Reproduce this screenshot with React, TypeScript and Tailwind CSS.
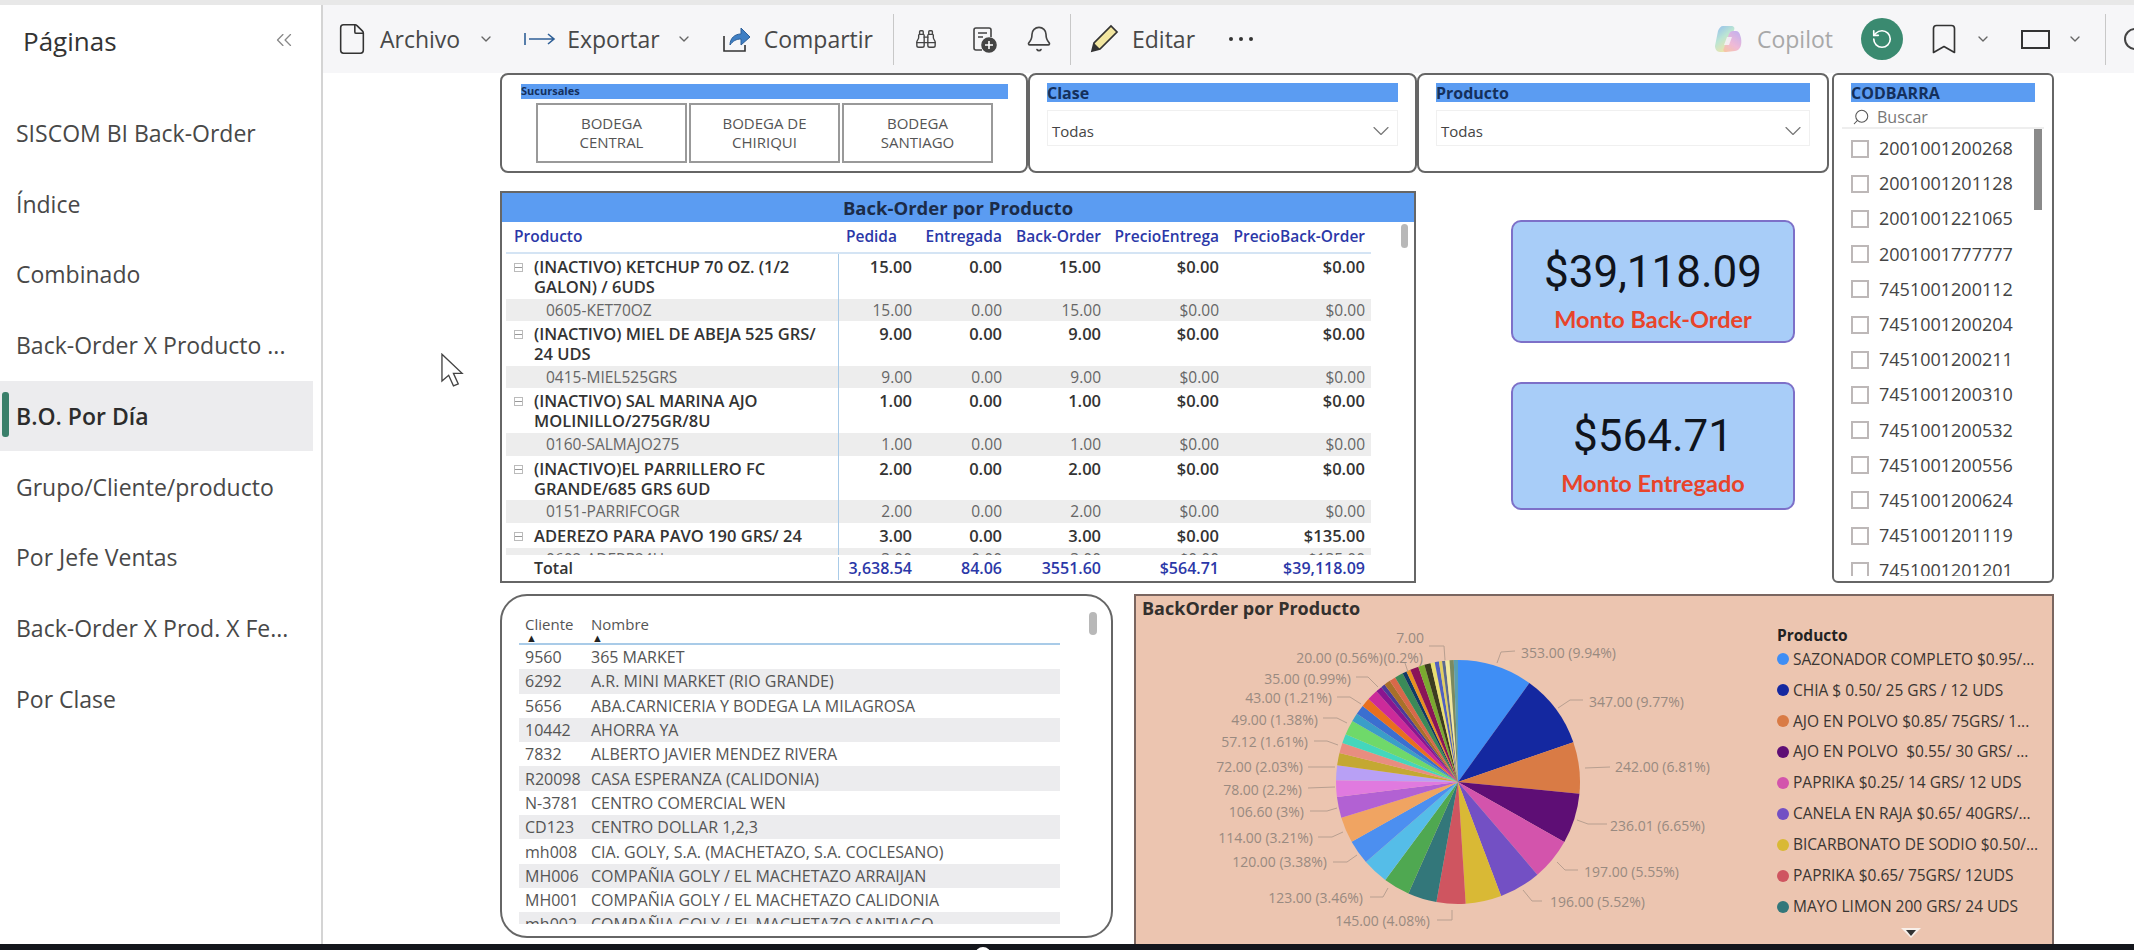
import { Bell, Binoculars, Bookmark, ChevronDown, ChevronsLeft, File, RotateCcw, Search } from "lucide-react";

const pages = [
  "SISCOM BI Back-Order",
  "Índice",
  "Combinado",
  "Back-Order X Producto ...",
  "B.O. Por Día",
  "Grupo/Cliente/producto",
  "Por Jefe Ventas",
  "Back-Order X Prod. X Fe...",
  "Por Clase",
];

const products = [
  { name: "(INACTIVO) KETCHUP 70 OZ. (1/2 GALON) / 6UDS", code: "0605-KET70OZ", vals: ["15.00", "0.00", "15.00", "$0.00", "$0.00"] },
  { name: "(INACTIVO) MIEL DE ABEJA 525 GRS/ 24 UDS", code: "0415-MIEL525GRS", vals: ["9.00", "0.00", "9.00", "$0.00", "$0.00"] },
  { name: "(INACTIVO) SAL MARINA AJO MOLINILLO/275GR/8U", code: "0160-SALMAJO275", vals: ["1.00", "0.00", "1.00", "$0.00", "$0.00"] },
  { name: "(INACTIVO)EL PARRILLERO FC GRANDE/685 GRS 6UD", code: "0151-PARRIFCOGR", vals: ["2.00", "0.00", "2.00", "$0.00", "$0.00"] },
  { name: "ADEREZO PARA PAVO 190 GRS/ 24", code: "0602-ADERP24U", vals: ["3.00", "0.00", "3.00", "$0.00", "$135.00"] },
];

const barcodes = [
  "2001001200268", "2001001201128", "2001001221065", "2001001777777", "7451001200112", "7451001200204", "7451001200211",
  "7451001200310", "7451001200532", "7451001200556", "7451001200624", "7451001201119", "7451001201201",
];

const clients = [
  ["9560", "365 MARKET"],
  ["6292", "A.R. MINI MARKET (RIO GRANDE)"],
  ["5656", "ABA.CARNICERIA Y BODEGA LA MILAGROSA"],
  ["10442", "AHORRA YA"],
  ["7832", "ALBERTO JAVIER MENDEZ RIVERA"],
  ["R20098", "CASA ESPERANZA (CALIDONIA)"],
  ["N-3781", "CENTRO COMERCIAL WEN"],
  ["CD123", "CENTRO DOLLAR 1,2,3"],
  ["mh008", "CIA. GOLY, S.A. (MACHETAZO, S.A. COCLESANO)"],
  ["MH006", "COMPAÑIA GOLY / EL MACHETAZO ARRAIJAN"],
  ["MH001", "COMPAÑIA GOLY / EL MACHETAZO CALIDONIA"],
  ["mh002", "COMPAÑIA GOLY / EL MACHETAZO SANTIAGO"],
];

const legend = [
  ["#3f8ef5", "SAZONADOR COMPLETO $0.95/..."],
  ["#1428a0", "CHIA $ 0.50/ 25 GRS / 12 UDS"],
  ["#d97b45", "AJO EN POLVO $0.85/ 75GRS/ 1..."],
  ["#5e0e75", "AJO EN POLVO  $0.55/ 30 GRS/ ..."],
  ["#d354ac", "PAPRIKA $0.25/ 14 GRS/ 12 UDS"],
  ["#7350c4", "CANELA EN RAJA $0.65/ 40GRS/..."],
  ["#d9b935", "BICARBONATO DE SODIO $0.50/..."],
  ["#cf5560", "PAPRIKA $0.65/ 75GRS/ 12UDS"],
  ["#33777a", "MAYO LIMON 200 GRS/ 24 UDS"],
];

// [end angle, colour], clockwise from 12 o'clock
const slices: [number, string][] = [
  [35.8, "#3f8ef5"], [71, "#1428a0"], [95.5, "#d97b45"], [119.4, "#5e0e75"], [139.4, "#d354ac"], [159.3, "#7350c4"],
  [176.4, "#d9b935"], [190.2, "#cf5560"], [204, "#33777a"], [216.6, "#4fa851"], [229, "#55bde8"], [240.7, "#4c8ff0"],
  [253, "#f0a462"], [262.9, "#b261d3"], [270.8, "#e07adf"], [277.9, "#b8a0f5"], [283.7, "#c4a832"], [288.6, "#e88d80"],
  [293, "#44d6bc"], [300, "#6fd96a"], [304, "#3a9ec8"], [308.6, "#3b6fd0"], [312.8, "#e86f1e"], [318, "#cc2a9a"], [321, "#8a1590"],
  [323, "#4a3a9a"], [326, "#a8702a"], [329, "#d8684a"], [333, "#3b8a58"], [335, "#103a66"], [337, "#e89020"],
  [341, "#8a1458"], [344, "#7aaa30"], [347, "#3c3c20"], [349, "#e8e070"], [351, "#5060c0"], [352.5, "#e0d060"],
  [354, "#5a6a90"], [356, "#f0e8a0"], [358, "#7a8a60"], [360, "#5a9fb0"],
];

// labels use page coordinates, the svg's viewBox starts at the panel's chart area
const pieLabels: [string, number, number, "start" | "end"][] = [
  ["353.00 (9.94%)", 1521, 658, "start"],
  ["347.00 (9.77%)", 1589, 707, "start"],
  ["242.00 (6.81%)", 1615, 772, "start"],
  ["236.01 (6.65%)", 1610, 831, "start"],
  ["197.00 (5.55%)", 1584, 877, "start"],
  ["196.00 (5.52%)", 1550, 907, "start"],
  ["145.00 (4.08%)", 1430, 926, "end"],
  ["123.00 (3.46%)", 1363, 903, "end"],
  ["120.00 (3.38%)", 1327, 867, "end"],
  ["114.00 (3.21%)", 1313, 843, "end"],
  ["106.60 (3%)", 1304, 817, "end"],
  ["78.00 (2.2%)", 1302, 795, "end"],
  ["72.00 (2.03%)", 1303, 772, "end"],
  ["57.12 (1.61%)", 1308, 747, "end"],
  ["49.00 (1.38%)", 1318, 725, "end"],
  ["43.00 (1.21%)", 1332, 703, "end"],
  ["35.00 (0.99%)", 1351, 684, "end"],
  ["20.00 (0.56%)", 1383, 663, "end"],
  ["(0.2%)", 1423, 663, "end"],
  ["7.00", 1424, 643, "end"],
];

const leaders = [
  "1497,663 1501,652 1515,651", "1558,708 1570,700 1583,700", "1585,768 1610,767", "1577,820 1588,824 1607,824",
  "1557,862 1565,870 1578,870", "1523,890 1532,901 1542,901", "1452,910 1452,920 1437,920", "1388,888 1383,897 1370,897",
  "1357,855 1347,862 1333,862", "1343,832 1332,837 1318,837", "1337,808 1327,811 1310,811", "1335,787 1308,788",
  "1335,767 1308,767", "1338,745 1327,741 1314,741", "1347,723 1337,718 1323,718", "1361,704 1350,697 1337,697",
  "1378,687 1368,677 1356,677", "1408,672 1405,663", "1445,660 1444,646 1429,646",
];

function slicePath(from: number, to: number) {
  const cx = 1458, cy = 782, r = 122;
  const pt = (a: number) => {
    const rad = (a * Math.PI) / 180;
    return `${(cx + r * Math.sin(rad)).toFixed(2)} ${(cy - r * Math.cos(rad)).toFixed(2)}`;
  };
  return `M${cx} ${cy}L${pt(from)}A${r} ${r} 0 0 1 ${pt(to)}Z`;
}

function Toolbar() {
  return (
    <div className="flex h-[68px] items-center bg-[#f6f6f8] text-[23px] text-[#484848]">
      <File className="ml-[12px] h-[34px] w-[34px] text-[#333]" strokeWidth={1.1} />
      <span className="ml-[11px]">Archivo</span>
      <ChevronDown className="ml-[18px] h-[16px] w-[16px] text-[#666]" />
      <svg viewBox="0 0 32 16" className="ml-[30px] h-[16px] w-[32px]" fill="none" stroke="#2f5f96" strokeWidth="1.6">
        <path d="M1 2v12M5 8h25M24 3l6 5-6 5" />
      </svg>
      <span className="ml-[11px]">Exportar</span>
      <ChevronDown className="ml-[16px] h-[16px] w-[16px] text-[#666]" />
      <svg viewBox="0 0 30 30" className="ml-[29px] h-[30px] w-[30px]" fill="none">
        <path d="M3 12v15h21v-6" stroke="#333" strokeWidth="1.6" />
        <path d="M9 21c0-7 5-11 11-11V4l9 9-9 8v-6c-5 0-8 2-11 6z" fill="#3f7fc4" stroke="#2c5f99" strokeWidth="1" />
      </svg>
      <span className="ml-[13px]">Compartir</span>
      <div className="ml-[20px] h-[51px] w-px bg-[#c8c8c8]" />
      <Binoculars className="ml-[21px] h-[22px] w-[22px] text-[#444]" strokeWidth={1.5} />
      <svg viewBox="0 0 26 28" className="ml-[34px] h-[28px] w-[26px]" fill="none" stroke="#444" strokeWidth="1.6">
        <path d="M11 25H5a2 2 0 0 1-2-2V5a2 2 0 0 1 2-2h13a2 2 0 0 1 2 2v7M7 8h9M7 12h5" />
        <circle cx="18" cy="20" r="7" fill="#444" />
        <path d="M18 16v8M14 20h8" stroke="#fff" />
      </svg>
      <Bell className="ml-[28px] h-[28px] w-[28px] text-[#444]" strokeWidth={1.4} />
      <div className="ml-[17px] h-[51px] w-px bg-[#c8c8c8]" />
      <svg viewBox="0 0 32 32" className="ml-[17px] h-[32px] w-[32px]" fill="none">
        <path d="M4 28l2-8L23 3l6 6-17 17z" fill="#f2e6a0" stroke="#333" strokeWidth="1.7" />
        <path d="M4 28l2-8 6 6z" fill="#333" />
      </svg>
      <span className="ml-[12px]">Editar</span>
      <div className="ml-[34px] flex gap-[6px]">
        <span className="h-[4px] w-[4px] rounded-full bg-[#333]" />
        <span className="h-[4px] w-[4px] rounded-full bg-[#333]" />
        <span className="h-[4px] w-[4px] rounded-full bg-[#333]" />
      </div>
      <svg viewBox="0 0 28 32" className="ml-auto h-[32px] w-[28px]" opacity="0.75">
        <defs>
          <linearGradient id="copA" x1="0" y1="0" x2="0.6" y2="1">
            <stop offset="0" stopColor="#6fa8ee" />
            <stop offset="0.5" stopColor="#a8e0c8" />
            <stop offset="1" stopColor="#f4e08a" />
          </linearGradient>
          <linearGradient id="copB" x1="0.8" y1="0" x2="0.2" y2="1">
            <stop offset="0" stopColor="#b49aea" />
            <stop offset="0.6" stopColor="#eea6cc" />
            <stop offset="1" stopColor="#f6b48e" />
          </linearGradient>
        </defs>
        <path d="M9 3h8c3 0 4 2 3 4l-6 19c-1 2-2 3-5 3H6c-3 0-5-3-5-6l3-15c1-3 3-5 5-5z" fill="url(#copA)" />
        <path d="M19 8h3c3 0 4 3 5 7 1 6 0 12-6 13l-9 1c-3 0-3-2-2-4l5-14c1-2 2-3 4-3z" fill="url(#copB)" />
        <path d="M13 14h5l-3 8h-5z" fill="#f6f6f8" opacity="0.85" />
      </svg>
      <span className="ml-[15px] text-[#a8a8a8]">Copilot</span>
      <div className="ml-[28px] flex h-[42px] w-[42px] items-center justify-center rounded-full bg-[#3a8a70]">
        <RotateCcw className="h-[22px] w-[22px] text-white" strokeWidth={1.8} />
      </div>
      <Bookmark className="ml-[23px] h-[36px] w-[36px] text-[#333]" strokeWidth={1.1} />
      <ChevronDown className="ml-[13px] h-[16px] w-[16px] text-[#666]" />
      <div className="ml-[30px] h-[19px] w-[29px] border-2 border-[#333]" />
      <ChevronDown className="ml-[17px] h-[16px] w-[16px] text-[#666]" />
      <div className="ml-[22px] h-[51px] w-px bg-[#c8c8c8]" />
      <div className="ml-[18px] mr-[-12px] h-[22px] w-[22px] shrink-0 rounded-full border-2 border-[#444]" />
    </div>
  );
}

function Dropdown({ title }: { title: string }) {
  return (
    <div className="h-[100px] w-full rounded-[8px] border-2 border-[#666] px-[17px] pt-[8px]">
      <div className="flex h-[19px] items-center bg-[#5b9cf2] text-[16px] leading-none font-bold text-[#14305c]">{title}</div>
      <div className="mt-[8px] flex h-[36px] items-center justify-between border border-[#f0f0f0] pt-[6px] pr-[2px] pl-[4px] text-[15px] text-[#444]">
        Todas
        <ChevronDown className="h-[28px] w-[28px] text-[#777]" strokeWidth={1} />
      </div>
    </div>
  );
}

function ProductTable() {
  const cols = "grid grid-cols-[333px_73px_90px_99px_118px_146px] w-[865px]";
  return (
    <div className="h-[392px] w-[916px] border-2 border-[#666]">
      <div className="flex h-[29px] items-center justify-center bg-[#5b9cf2] text-[18.5px] font-bold text-[#1c2c48]">Back-Order por Producto</div>
      <div className="relative pl-[4px]">
        <div className={`${cols} h-[32px] items-center border-b-2 border-[#d4e4f4] text-right text-[15.5px] font-semibold whitespace-nowrap text-[#2b38a8]`}>
          <span className="pl-[8px] text-left">Producto</span>
          <span className="pr-[15px]">Pedida</span>
          <span>Entregada</span>
          <span>Back-Order</span>
          <span>PrecioEntrega</span>
          <span>PrecioBack-Order</span>
        </div>
        <div className="h-[301px] overflow-hidden">
          {products.map((p, i) => (
            <div key={p.code}>
              <div className={`${cols} ${i === 4 ? "h-[25px]" : "h-[44.5px]"} text-right text-[16.5px] leading-[20px] font-semibold text-[#333]`}>
                <div className="flex border-r border-[#a9cbe8] pt-[3px] text-left">
                  <span className="mt-[6px] ml-[8px] flex h-[9px] w-[9px] shrink-0 items-center border border-[#bbb]">
                    <span className="h-px w-full bg-[#999]" />
                  </span>
                  <span className="ml-[11px] w-[300px]">{p.name}</span>
                </div>
                {p.vals.map((v, j) => (
                  <span key={j} className="pt-[3px]">{v}</span>
                ))}
              </div>
              <div className={`${cols} h-[22.7px] items-center bg-[#ededed] text-right text-[15.5px] text-[#666]`}>
                <span className="h-full border-r border-[#a9cbe8] pl-[40px] text-left leading-[22px]">{p.code}</span>
                {p.vals.map((v, j) => (
                  <span key={j}>{v}</span>
                ))}
              </div>
            </div>
          ))}
        </div>
        <div className={`${cols} h-[26px] items-center text-right text-[16px] font-semibold text-[#2b38a8]`}>
          <span className="h-[23px] border-r border-[#a9cbe8] pl-[28px] text-left leading-[23px] text-[#333]">Total</span>
          <span>3,638.54</span>
          <span>84.06</span>
          <span>3551.60</span>
          <span>$564.71</span>
          <span>$39,118.09</span>
        </div>
        <div className="absolute top-[2px] left-[899px] h-[24px] w-[7px] rounded bg-[#b8b8b8]" />
      </div>
    </div>
  );
}

function Kpi({ value, label, height }: { value: string; label: string; height: string }) {
  return (
    <div className={`flex ${height} flex-col items-center justify-center rounded-[10px] border-2 border-[#7d70c8] bg-[#a8cdf8] pt-[16px]`}>
      <div className="font-['Roboto',sans-serif] text-[44px] leading-[50px] text-[#10141c]">{value}</div>
      <div className="mt-[8px] font-['Lato',sans-serif] text-[23.5px] leading-[28px] font-bold text-[#e8442a]">{label}</div>
    </div>
  );
}

function BarcodeSlicer() {
  return (
    <div className="relative ml-[3px] h-[510px] w-[222px] rounded-[6px] border-2 border-[#666] pt-[8px]">
      <div className="mx-[17px] flex h-[19px] items-center bg-[#5b9cf2] text-[16px] leading-none font-bold text-[#14305c]">CODBARRA</div>
      <div className="mx-[8px] flex h-[27px] items-center border-b-2 border-[#eee] pt-[4px] pl-[10px] text-[16px] text-[#777]">
        <Search className="h-[18px] w-[18px] -scale-x-100 text-[#555]" strokeWidth={1.4} />
        <span className="ml-[7px]">Buscar</span>
      </div>
      <div className="h-[447px] overflow-hidden pt-[2px]">
        {barcodes.map((b) => (
          <div key={b} className="flex h-[35.2px] items-center pl-[17px] text-[18px] text-[#444]">
            <span className="h-[18px] w-[18px] border-2 border-[#bdb8b8]" />
            <span className="ml-[10px]">{b}</span>
          </div>
        ))}
      </div>
      <div className="absolute top-[54px] left-[200px] h-[81px] w-[8px] bg-[#8a8a8a]" />
    </div>
  );
}

function ClientTable() {
  return (
    <div className="relative h-[344px] w-[613px] rounded-[27px] border-2 border-[#666] pt-[16px] pl-[17px] text-[16px] text-[#555]">
      <div className="flex h-[33px] w-[541px] border-b-2 border-[#a9cbe8] pl-[6px] text-[15px] leading-[24px]">
        <div className="relative w-[66px]">
          Cliente
          <span className="absolute top-[21px] left-[1px] text-[11px] leading-[9px] text-[#222]">▲</span>
        </div>
        <div className="relative">
          Nombre
          <span className="absolute top-[21px] left-[1px] text-[11px] leading-[9px] text-[#222]">▲</span>
        </div>
      </div>
      <div className="h-[279px] w-[541px] overflow-hidden">
        {clients.map(([id, name], i) => (
          <div key={id} className={`flex h-[24.3px] items-center pl-[6px] ${i % 2 === 1 ? "bg-[#ececee]" : ""}`}>
            <span className="w-[66px]">{id}</span>
            <span>{name}</span>
          </div>
        ))}
      </div>
      <div className="absolute top-[16px] left-[587px] h-[23px] w-[8px] rounded bg-[#b8b8b8]" />
    </div>
  );
}

function PiePanel() {
  let from = 0;
  const paths = slices.map(([to, color]) => {
    const d = slicePath(from, to);
    from = to;
    return <path key={to} d={d} fill={color} />;
  });
  return (
    <div className="relative h-[350px] w-[920px] border-2 border-b-0 border-[#7a6660] bg-[#ecc5b0]">
      <div className="-mt-[2px] h-[32px] pl-[6px] pt-[1px] text-[18px] leading-[26px] font-bold text-[#33302e]">BackOrder por Producto</div>
      <div className="flex">
        <svg viewBox="1136 626 640 318" className="h-[318px] w-[640px] shrink-0 text-[14px]">
          {paths}
          {leaders.map((pts) => (
            <polyline key={pts} points={pts} fill="none" stroke="#b89f90" strokeWidth="1" />
          ))}
          {pieLabels.map(([t, x, y, anchor]) => (
            <text key={t} x={x} y={y} textAnchor={anchor} fill="#998a80">{t}</text>
          ))}
        </svg>
        <div className="pl-[1px] text-[15.5px] text-[#3a3532]">
          <div className="-mt-[1px] text-[15.5px] leading-[20px] font-bold text-[#222]">Producto</div>
          <div className="mt-[-1px]">
            {legend.map(([color, name]) => (
              <div key={name} className="flex h-[30.9px] items-center whitespace-pre">
                <span className="h-[12px] w-[12px] shrink-0 rounded-full" style={{ backgroundColor: color }} />
                <span className="ml-[4px]">{name}</span>
              </div>
            ))}
          </div>
        </div>
      </div>
      <svg viewBox="0 0 22 12" className="absolute right-[130px] bottom-[5px] h-[12px] w-[22px]">
        <path d="M1 1h20L11 11z" fill="#f8f0ea" />
        <path d="M6 3h10l-5 6z" fill="#333" />
      </svg>
    </div>
  );
}

export default function App() {
  return (
    <div className="relative flex h-[950px] w-[2134px] flex-col overflow-hidden bg-white font-['Open_Sans',sans-serif]">
      <div className="h-[5px] bg-[#e8e8e8]" />
      <div className="flex min-h-0 flex-1">
        {/* Pages */}
        <div className="w-[323px] shrink-0 border-r-2 border-[#d4d4d4]">
          <div className="flex h-[93px] items-start justify-between pt-[17px] pr-[24px] pl-[23px]">
            <span className="text-[26px] font-medium text-[#333]">Páginas</span>
            <ChevronsLeft className="mt-[5px] h-[26px] w-[26px] text-[#888]" strokeWidth={1.2} />
          </div>
          {pages.map((p) => {
            const active = p === "B.O. Por Día";
            return (
              <div
                key={p}
                className={`relative mr-[8px] flex h-[70.7px] items-center pl-[16px] text-[23px] whitespace-nowrap ${active ? "bg-[#ececee] font-semibold text-[#2c2c2c]" : "text-[#484848]"}`}
              >
                {active && <span className="absolute top-[11px] left-[2px] h-[45px] w-[7px] rounded-[3px] bg-[#3a7f6a]" />}
                {p}
              </div>
            );
          })}
        </div>

        <div className="min-w-0 flex-1">
          <Toolbar />
          <div className="pl-[177px] text-[#333]">
            <div className="flex">
              <div className="w-[1329px]">
                <div className="flex">
                  <div className="h-[100px] w-[528px] shrink-0 rounded-[8px] border-2 border-[#666] px-[19px] pt-[9px]">
                    <div className="flex h-[15px] w-[487px] items-center bg-[#5b9cf2] text-[11px] font-bold text-[#14305c]">Sucursales</div>
                    <div className="mt-[4px] flex gap-[2px] pl-[15px] text-center text-[15px] leading-[19px] text-[#555]">
                      {["BODEGA CENTRAL", "BODEGA DE CHIRIQUI", "BODEGA SANTIAGO"].map((b) => (
                        <div key={b} className="flex h-[60px] w-[151px] items-center justify-center border-2 border-[#999] px-[26px]">{b}</div>
                      ))}
                    </div>
                  </div>
                  <div className="w-[389px] shrink-0"><Dropdown title="Clase" /></div>
                  <div className="w-[412px] shrink-0"><Dropdown title="Producto" /></div>
                </div>
                <div className="mt-[18px] flex">
                  <ProductTable />
                  <div className="ml-[95px] w-[284px] pt-[29px]">
                    <Kpi value="$39,118.09" label="Monto Back-Order" height="h-[123px]" />
                    <div className="mt-[39px]">
                      <Kpi value="$564.71" label="Monto Entregado" height="h-[128px]" />
                    </div>
                  </div>
                </div>
              </div>
              <BarcodeSlicer />
            </div>
            <div className="mt-[11px] flex gap-[21px]">
              <ClientTable />
              <PiePanel />
            </div>
          </div>
        </div>
      </div>
      <div className="relative h-[6px] shrink-0 bg-[#14161c]">
        <span className="absolute top-[3px] left-[975px] h-[16px] w-[16px] rounded-full bg-white" />
      </div>

      {/* mouse pointer */}
      <svg viewBox="0 0 24 36" className="absolute top-[353px] left-[441px] h-[35px] w-[23px]" fill="#fff" stroke="#444" strokeWidth="1.4">
        <path d="M1 1v28l7-6 5 11 5-2-5-11h9z" />
      </svg>
    </div>
  );
}
